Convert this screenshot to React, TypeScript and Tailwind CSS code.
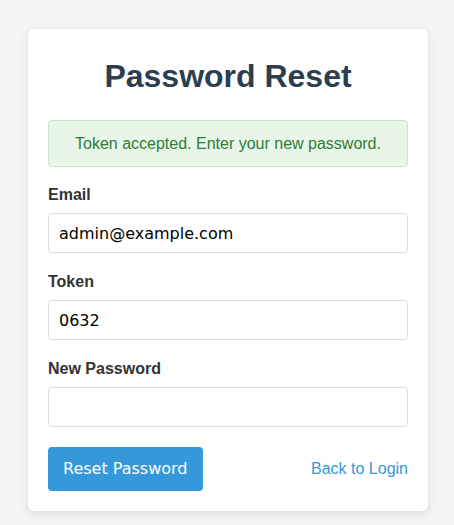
import React from "react";

export default function App() {
  return (
    <div className="min-h-screen bg-[#f4f4f4] pt-[29px] pb-[20px] pl-[28px]" style={{ fontFamily: '"Liberation Sans", Arial, sans-serif' }}>
      <div className="w-[400px] rounded-[6px] bg-white px-[20px] pt-[20px] pb-[20px] shadow-[0_2px_10px_rgba(0,0,0,0.1)]">
        <h1 className="mt-[9px] mb-[26px] text-center text-[32px] leading-[36px] font-bold text-[#2c3e50]">
          Password Reset
        </h1>
        <div className="mb-[19px] rounded-[4px] border border-[#c8e6c9] bg-[#e8f5e9] py-[14px] text-center text-[16px] leading-[17px] text-[#2e7d32]">
          Token accepted. Enter your new password.
        </div>
        <div className="mb-[20px]">
          <label className="mb-[9px] block text-[16px] leading-[18px] font-bold text-[#333]">Email</label>
          <input
            type="email"
            defaultValue="admin@example.com"
            className="block h-[40px] w-full rounded-[4px] border border-[#ddd] px-[10px] text-[16px] text-black outline-none"
            style={{ fontFamily: '"DejaVu Sans", sans-serif' }}
          />
        </div>
        <div className="mb-[20px]">
          <label className="mb-[9px] block text-[16px] leading-[18px] font-bold text-[#333]">Token</label>
          <input
            type="text"
            defaultValue="0632"
            className="block h-[40px] w-full rounded-[4px] border border-[#ddd] px-[10px] text-[16px] text-black outline-none"
            style={{ fontFamily: '"DejaVu Sans", sans-serif' }}
          />
        </div>
        <div className="mb-[20px]">
          <label className="mb-[9px] block text-[16px] leading-[18px] font-bold text-[#333]">New Password</label>
          <input
            type="password"
            className="block h-[40px] w-full rounded-[4px] border border-[#ddd] px-[10px] text-[16px] text-black outline-none"
            style={{ fontFamily: '"DejaVu Sans", sans-serif' }}
          />
        </div>
        <div className="flex items-center justify-between">
          <button
            className="rounded-[4px] bg-[#3498db] px-[15px] py-[10px] text-[16px] text-white"
            style={{ fontFamily: '"DejaVu Sans", sans-serif' }}
          >
            Reset Password
          </button>
          <a href="#" className="text-[16px] text-[#3498db]">
            Back to Login
          </a>
        </div>
      </div>
    </div>
  );
}
